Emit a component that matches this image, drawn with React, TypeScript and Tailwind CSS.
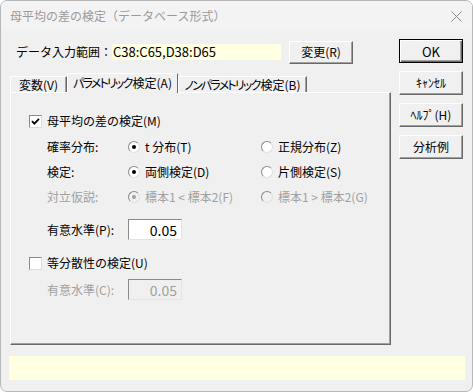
const raised =
    'border border-t-white border-l-white border-r-[#696969] border-b-[#696969] shadow-[inset_-1px_-1px_0_#a0a0a0]'

function Btn({ children, def = false, className = '' }: { children: React.ReactNode; def?: boolean; className?: string }) {
    return (
        <div
            className={`flex items-center justify-center bg-[#f0f0f0] text-[12px] text-black ${
                def
                    ? 'border border-black shadow-[inset_1px_1px_0_#fff,inset_-1px_-1px_0_#696969,inset_-2px_-2px_0_#a0a0a0]'
                    : raised
            } ${className}`}
        >
            {children}
        </div>
    )
}

function Check({ checked }: { checked: boolean }) {
    return (
        <div className="w-[13px] h-[13px] bg-white border border-t-[#8a8a8a] border-l-[#8a8a8a] border-r-[#dcdcdc] border-b-[#dcdcdc] flex items-center justify-center shrink-0">
            {checked && (
                <svg width="9" height="9" viewBox="0 0 9 9">
                    <path d="M1 4.2 L3.4 6.6 L8 1.8" stroke="#000" strokeWidth="1.8" fill="none" />
                </svg>
            )}
        </div>
    )
}

function Radio({ on, disabled = false }: { on: boolean; disabled?: boolean }) {
    return (
        <div
            className={`w-[12px] h-[12px] rounded-full border border-t-[#8a8a8a] border-l-[#8a8a8a] border-r-[#e0e0e0] border-b-[#e0e0e0] flex items-center justify-center shrink-0 ${
                disabled ? 'bg-[#f0f0f0]' : 'bg-white'
            }`}
        >
            {on && <div className={`w-[4px] h-[4px] rounded-full ${disabled ? 'bg-[#a0a0a0]' : 'bg-black'}`} />}
        </div>
    )
}

function RadioItem({ on, label, disabled = false }: { on: boolean; label: string; disabled?: boolean }) {
    return (
        <div className={`flex items-center gap-[5px] ${disabled ? 'text-[#a0a0a0]' : 'text-black'}`}>
            <Radio on={on} disabled={disabled} />
            <span>{label}</span>
        </div>
    )
}

export default function App() {
    return (
        <div className="w-[473px] h-[392px] bg-white font-['Noto_Sans_CJK_JP','Noto_Sans',sans-serif] text-[12px] leading-none">
            <div className="h-full border border-[#b8b8b8] rounded-[7px] bg-[#f0f0f0] overflow-hidden flex flex-col">
                {/* Title bar */}
                <div className="h-[30px] bg-[#f3f3f3] flex items-center justify-between pl-[9px] pr-[10px] text-[#9a9a9a]">
                    <span className="text-[12px]">母平均の差の検定（データベース形式）</span>
                    <svg width="11" height="11" viewBox="0 0 11 11">
                        <path d="M0.5 0.5 L10.5 10.5 M10.5 0.5 L0.5 10.5" stroke="#8a8a8a" strokeWidth="1" />
                    </svg>
                </div>

                <div className="flex px-[9px] pt-[8px]">
                    {/* Left column */}
                    <div className="w-[383px]">
                        <div className="flex items-center h-[24px] mt-[1px]">
                            <span className="ml-[6px] w-[96px]">データ入力範囲：</span>
                            <div className="w-[169px] h-[16px] bg-[#ffffe1] text-[13px] leading-[16px] text-black pl-[1px]">
                                C38:C65,D38:D65
                            </div>
                            <Btn className="ml-[8px] w-[64px] h-[23px]">変更(R)</Btn>
                        </div>

                        {/* Tabs */}
                        <div className="mt-[9px] h-[19px] flex items-end relative z-10 whitespace-nowrap [font-feature-settings:'palt']">
                            <div className={`${raised} border-b-0 shadow-[inset_-1px_0_0_#a0a0a0] h-[16px] w-[57px] flex items-center justify-center`}>
                                変数(V)
                            </div>
                            <div className="h-[20px] -mb-[1px] w-[111px] bg-[#f0f0f0] border-t border-l border-r border-t-white border-l-white border-r-[#696969] flex items-center justify-center pb-[2px]">
                                <span className="tracking-[-1.8px]">パラメトリック</span>
                                <span className="ml-[1px]">検定(A)</span>
                            </div>
                            <div className={`${raised} border-b-0 shadow-[inset_-1px_0_0_#a0a0a0] h-[16px] w-[129px] flex items-center justify-center`}>
                                <span className="tracking-[-1.8px]">ノンパラメトリック</span>
                                <span className="ml-[1px]">検定(B)</span>
                            </div>
                        </div>

                        {/* Panel */}
                        <div className={`${raised} h-[253px] pt-[19px] pl-[18px]`}>
                            <div className="h-[18px] flex items-center gap-[5px]">
                                <Check checked />
                                <span>母平均の差の検定(M)</span>
                            </div>

                            <div className="pl-[18px]">
                                <div className="mt-[8px] h-[18px] flex items-center">
                                    <span className="w-[81px]">確率分布:</span>
                                    <div className="w-[133px]">
                                        <RadioItem on label="t 分布(T)" />
                                    </div>
                                    <RadioItem on={false} label="正規分布(Z)" />
                                </div>
                                <div className="mt-[7px] h-[18px] flex items-center">
                                    <span className="w-[81px]">検定:</span>
                                    <div className="w-[133px]">
                                        <RadioItem on label="両側検定(D)" />
                                    </div>
                                    <RadioItem on={false} label="片側検定(S)" />
                                </div>
                                <div className="mt-[7px] h-[18px] flex items-center text-[#a0a0a0]">
                                    <span className="w-[81px]">対立仮説:</span>
                                    <div className="w-[133px]">
                                        <RadioItem on disabled label="標本1 < 標本2(F)" />
                                    </div>
                                    <RadioItem on={false} disabled label="標本1 > 標本2(G)" />
                                </div>
                                <div className="mt-[13px] h-[21px] flex items-center">
                                    <span className="w-[81px]">有意水準(P):</span>
                                    <div className="w-[54px] h-[21px] bg-white border border-t-[#8a8a8a] border-l-[#8a8a8a] border-r-[#e3e3e3] border-b-[#e3e3e3] flex items-center justify-end pr-[4px] text-[14px]">
                                        0.05
                                    </div>
                                </div>
                            </div>

                            <div className="mt-[14px] h-[18px] flex items-center gap-[5px]">
                                <Check checked={false} />
                                <span>等分散性の検定(U)</span>
                            </div>
                            <div className="pl-[18px]">
                                <div className="mt-[7px] h-[21px] flex items-center text-[#a0a0a0]">
                                    <span className="w-[81px]">有意水準(C):</span>
                                    <div className="w-[54px] h-[21px] bg-[#f0f0f0] border border-t-[#8a8a8a] border-l-[#8a8a8a] border-r-[#e3e3e3] border-b-[#e3e3e3] flex items-center justify-end pr-[4px] text-[14px]">
                                        0.05
                                    </div>
                                </div>
                            </div>
                        </div>
                    </div>

                    {/* Right buttons */}
                    <div className="ml-[8px] flex flex-col gap-[8px]">
                        <Btn def className="w-[64px] h-[24px] text-[13px]">
                            OK
                        </Btn>
                        <Btn className="w-[64px] h-[24px]">ｷｬﾝｾﾙ</Btn>
                        <Btn className="w-[64px] h-[24px]">ﾍﾙﾌﾟ(H)</Btn>
                        <Btn className="w-[64px] h-[24px]">分析例</Btn>
                    </div>
                </div>

                {/* Status bar */}
                <div className="mt-[11px] ml-[8px] w-[456px] h-[24px] bg-[#ffffe1]" />
            </div>
        </div>
    )
}
